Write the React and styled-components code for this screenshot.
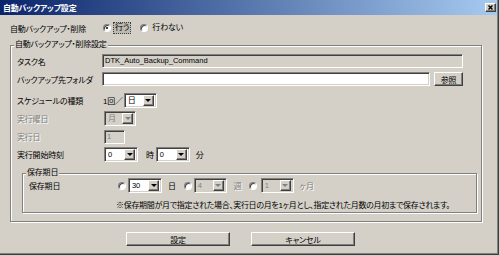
import React from "react";
import styled, { createGlobalStyle, css } from "styled-components";

const GlobalStyle = createGlobalStyle`
  html, body {
    margin: 0;
    padding: 0;
    background: #d4d0c8;
  }
  body {
    font-family: "Liberation Sans", "Noto Sans CJK JP", sans-serif;
    font-size: 8px;
    letter-spacing: -0.2px;
    font-feature-settings: "palt" 1;
    color: #000;
  }
`;

const raised = css`
  border: 1px solid;
  border-color: #fff #404040 #404040 #fff;
  box-shadow: inset -1px -1px #808080, inset 1px 1px #d4d0c8;
`;

const sunken = css`
  border: 1px solid;
  border-color: #808080 #fff #fff #808080;
  box-shadow: inset 1px 1px #404040, inset -1px -1px #d4d0c8;
`;

const Window = styled.div`
  width: 499px;
  height: 255px;
  box-sizing: border-box;
  display: flex;
  flex-direction: column;
  background: #d4d0c8;
  border-right: 1px solid #404040;
  border-bottom: 1px solid #404040;
  box-shadow: inset -1px -1px #808080;
`;

const TitleBar = styled.div`
  height: 15px;
  margin-right: 1px;
  display: flex;
  align-items: center;
  justify-content: space-between;
  padding: 0 1px 0 3px;
  background: linear-gradient(to right, #0a246a, #a6caf0);
  color: #fff;
  font-weight: bold;
`;

const CloseButton = styled.div`
  width: 11px;
  height: 9px;
  box-sizing: border-box;
  ${raised};
  background: #d4d0c8;
  display: grid;
  place-items: center;
`;

const Content = styled.div`
  display: flex;
  flex-direction: column;
  padding: 7px 0 0 10px;
`;

const Row = styled.div`
  display: flex;
  align-items: center;
  height: ${(p) => p.$h || 15}px;
  margin-top: ${(p) => p.$mt || 0}px;
  padding-right: ${(p) => p.$pr || 0}px;
`;

const Label = styled.span`
  width: ${(p) => p.$w}px;
  flex: none;
  white-space: nowrap;
  color: ${(p) => (p.$disabled ? "#808080" : "#000")};
  text-shadow: ${(p) => (p.$disabled ? "1px 1px #fff" : "none")};
`;

const Text = styled.span`
  margin-left: ${(p) => p.$ml || 0}px;
  white-space: nowrap;
  color: ${(p) => (p.$disabled ? "#808080" : "#000")};
  text-shadow: ${(p) => (p.$disabled ? "1px 1px #fff" : "none")};
`;

const Option = styled.label`
  display: flex;
  align-items: center;
  margin-left: ${(p) => p.$ml || 0}px;
`;

const RadioDot = styled.span`
  width: 8px;
  height: 8px;
  box-sizing: border-box;
  border-radius: 50%;
  border: 1px solid;
  border-color: #808080 #fff #fff #808080;
  box-shadow: inset 1px 1px #404040;
  background: #fff;
  display: grid;
  place-items: center;

  &::after {
    content: "";
    width: 2px;
    height: 2px;
    border-radius: 50%;
    background: ${(p) => (p.$checked ? "#000" : "transparent")};
  }
`;

const OptionText = styled.span`
  margin-left: 2px;
  padding: 0 1px;
  line-height: 10px;
  border: 1px dotted ${(p) => (p.$focus ? "#404040" : "transparent")};
  background: ${(p) => (p.$focus ? "#bdbab3" : "transparent")};
`;

const Group = styled.div`
  position: relative;
  box-sizing: border-box;
  width: ${(p) => p.$w}px;
  margin: ${(p) => p.$margin};
  padding: ${(p) => p.$padding};
  border: 1px solid #808080;
  box-shadow: inset 1px 1px #fff, 1px 1px #fff;
  display: flex;
  flex-direction: column;
`;

const GroupTitle = styled.span`
  position: absolute;
  top: -7px;
  left: 3px;
  padding: 0 1px;
  line-height: 12px;
  background: #d4d0c8;
`;

const Field = styled.input`
  width: ${(p) => p.$w}px;
  height: 14px;
  box-sizing: border-box;
  margin: 0;
  padding: 0 0 1px 2px;
  ${sunken};
  background: ${(p) => (p.$readOnlyLook ? "#d4d0c8" : "#fff")};
  font-family: "Liberation Sans", "Noto Sans CJK JP", sans-serif;
  font-size: 7.5px;
  letter-spacing: 0;
  line-height: 11px;
  color: ${(p) => (p.$disabled ? "#808080" : "#000")};
  outline: none;
`;

const Button = styled.button`
  width: ${(p) => p.$w}px;
  height: ${(p) => p.$h || 14}px;
  box-sizing: border-box;
  margin: 0 0 0 ${(p) => p.$ml || 0}px;
  padding: 0;
  ${raised};
  background: #d4d0c8;
  font-family: "Liberation Sans", "Noto Sans CJK JP", sans-serif;
  font-size: 8px;
  letter-spacing: -0.2px;
  font-feature-settings: "palt" 1;
  color: #000;
`;

const SelectBox = styled.div`
  width: ${(p) => p.$w}px;
  height: 15px;
  box-sizing: border-box;
  margin-left: ${(p) => p.$ml || 0}px;
  ${sunken};
  background: ${(p) => (p.$disabled ? "#d4d0c8" : "#fff")};
  display: flex;
  align-items: center;
  padding: 2px;
  flex: none;
`;

const SelectValue = styled.span`
  flex: 1;
  padding-left: 1px;
  font-size: ${(p) => (p.$jp ? "8px" : "7.5px")};
  color: ${(p) => (p.$disabled ? "#808080" : "#000")};
  line-height: 9px;
`;

const ArrowButton = styled.span`
  width: 11px;
  height: 11px;
  box-sizing: border-box;
  ${raised};
  background: #d4d0c8;
  display: grid;
  place-items: center;

  &::after {
    content: "";
    width: 0;
    height: 0;
    border-left: 3px solid transparent;
    border-right: 3px solid transparent;
    border-top: 3px solid ${(p) => (p.$disabled ? "#808080" : "#000")};
  }
`;

const Note = styled.div`
  margin: 7px 0 0 87px;
  line-height: 11px;
  letter-spacing: -0.3px;
  white-space: nowrap;
`;

const ButtonBar = styled.div`
  display: flex;
  margin: 10px 0 0 116px;
`;

const Select = ({ w, value, disabled, jp, ml }) => (
  <SelectBox $w={w} $disabled={disabled} $ml={ml}>
    <SelectValue $disabled={disabled} $jp={jp}>
      {value}
    </SelectValue>
    <ArrowButton $disabled={disabled} />
  </SelectBox>
);

const Radio = ({ checked, children, focus, ml }) => (
  <Option $ml={ml}>
    <RadioDot $checked={checked} />
    {children && <OptionText $focus={focus}>{children}</OptionText>}
  </Option>
);

export default function App() {
  return (
    <>
      <GlobalStyle />
      <Window>
        <TitleBar>
          <span>自動バックアップ設定</span>
          <CloseButton>
            <svg width="5" height="5" viewBox="0 0 5 5">
              <path d="M0.5 0.5 L4.5 4.5 M4.5 0.5 L0.5 4.5" stroke="#000" strokeWidth="1.4" />
            </svg>
          </CloseButton>
        </TitleBar>

        <Content>
          <Row $h={12}>
            <Label $w={93}>自動バックアップ・削除</Label>
            <Radio checked focus>
              行う
            </Radio>
            <Radio ml={9}>行わない</Radio>
          </Row>

          <Group $w={472} $margin="11px 0 0 0" $padding="8px 4px 8px 6px">
            <GroupTitle>自動バックアップ・削除設定</GroupTitle>

            <Row $h={14} $pr={14}>
              <Label $w={85}>タスク名</Label>
              <Field $w={361} $readOnlyLook readOnly value="DTK_Auto_Backup_Command" />
            </Row>
            <Row $h={14} $mt={4} $pr={14}>
              <Label $w={85}>バックアップ先フォルダ</Label>
              <Field $w={328} readOnly value="" />
              <Button $w={29} $ml={4}>
                参照
              </Button>
            </Row>

            <Row $mt={7}>
              <Label $w={86}>スケジュールの種類</Label>
              <Text>1回／</Text>
              <Select w={33} value="日" jp ml={1} />
            </Row>
            <Row $mt={3}>
              <Label $w={87} $disabled>
                実行曜日
              </Label>
              <Select w={32} value="月" jp disabled />
            </Row>
            <Row $mt={3}>
              <Label $w={87} $disabled>
                実行日
              </Label>
              <Field $w={21} $readOnlyLook $disabled readOnly value="1" />
            </Row>
            <Row $mt={3}>
              <Label $w={87}>実行開始時刻</Label>
              <Select w={34} value="0" />
              <Text $ml={8}>時</Text>
              <Select w={34} value="0" ml={2} />
              <Text $ml={6}>分</Text>
            </Row>

            <Group $w={455} $margin="11px 0 0 5px" $padding="4px 0 1px 6px">
              <GroupTitle>保存期日</GroupTitle>
              <Row>
                <Label $w={89}>保存期日</Label>
                <Radio />
                <Select w={34} value="30" ml={2} />
                <Text $ml={6}>日</Text>
                <Radio ml={8} />
                <Select w={33} value="4" disabled ml={2} />
                <Text $ml={7} $disabled>
                  週
                </Text>
                <Radio ml={7} />
                <Select w={33} value="1" disabled ml={4} />
                <Text $ml={6} $disabled>
                  ヶ月
                </Text>
              </Row>
              <Note>
                ※保存期間が月で指定された場合、実行日の月を1ヶ月とし、指定された月数の月初まで保存されます。
              </Note>
            </Group>
          </Group>

          <ButtonBar>
            <Button $w={104}>設定</Button>
            <Button $w={104} $ml={21}>
              キャンセル
            </Button>
          </ButtonBar>
        </Content>
      </Window>
    </>
  );
}
